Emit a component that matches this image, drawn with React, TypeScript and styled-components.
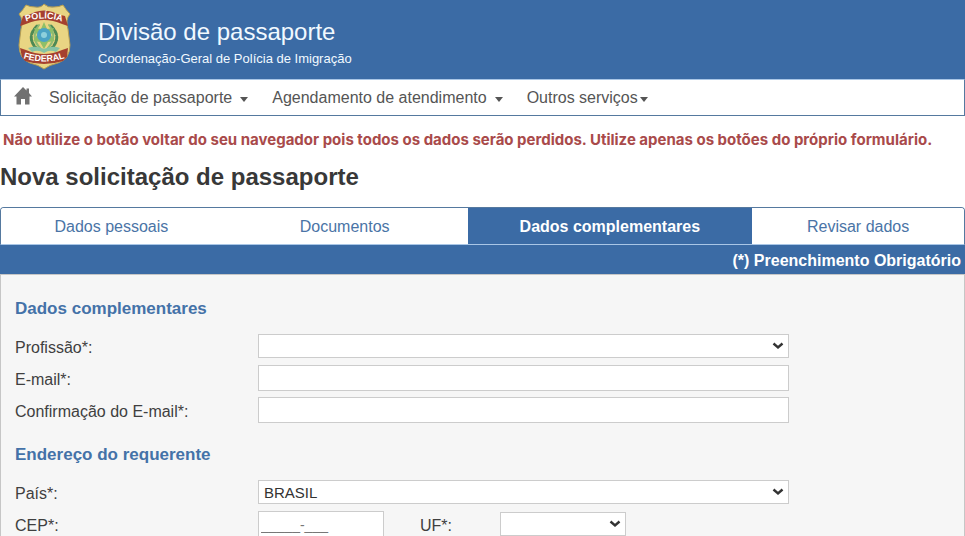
import React, { useState } from "react";
import styled, { createGlobalStyle, css } from "styled-components";

const blue = "#3b6ba5";
const line = "#55799f";

const GlobalStyle = createGlobalStyle`
  *, *::before, *::after { box-sizing: border-box; }
  body {
    margin: 0;
    background: #fff;
    color: #3f3f3f;
    font-family: "Liberation Sans", Arial, Helvetica, sans-serif;
    font-size: 16px;
    line-height: 20px;
  }
`;

const Page = styled.div`
  display: flex;
  flex-direction: column;
  height: 100vh;
  overflow: hidden;
`;

const Header = styled.header`
  display: flex;
  flex: none;
  align-items: flex-start;
  gap: 27px;
  padding: 3px 18px 9px;
  background: ${blue};
  color: #f1f9ff;
`;

const Crest = styled.svg`
  flex: none;
  width: 53px;
  height: 67px;
`;

const Brand = styled.div`
  padding-top: 15px;
`;

const BrandTitle = styled.p`
  margin: 0;
  font-size: 24px;
  line-height: 28px;
`;

const BrandSubtitle = styled.p`
  margin: 0;
  padding-top: 3px;
  font-size: 13px;
  line-height: 20px;
`;

const Nav = styled.nav`
  display: flex;
  flex: none;
  align-items: center;
  gap: 24px;
  height: 37px;
  padding: 0 13px;
  border: 1px solid ${line};
  border-top-color: #a9c6e6;
`;

const HomeLink = styled.a`
  display: flex;
  margin: 0 -7px 4px 0;
  color: #717171;
`;

const MenuButton = styled.button<{ $tight?: boolean }>`
  display: flex;
  align-items: center;
  gap: ${(p) => (p.$tight ? 2 : 8)}px;
  padding: 0;
  border: 0;
  background: none;
  color: #555;
  font: inherit;
  cursor: pointer;

  &::after {
    content: "";
    margin-top: 3px;
    border: 4px solid transparent;
    border-top: 5px solid #555;
    border-bottom: 0;
  }
`;

const Warning = styled.p`
  margin: 14px 3px 0;
  color: #a94a4a;
  font-family: Inter, "Liberation Sans", sans-serif;
  font-size: 15px;
  font-weight: 700;
`;

const PageTitle = styled.h1`
  margin: 13px 0 16px;
  color: #383838;
  font-size: 24px;
  font-weight: bold;
  line-height: 28px;
`;

const Tabs = styled.div`
  display: grid;
  grid-template-columns: 221fr 246fr 285fr 212fr;
  flex: none;
  height: 38px;
  border: 1px solid ${line};
  border-bottom-color: #a9c6e6;
  border-radius: 4px 4px 0 0;
  overflow: hidden;
`;

const Tab = styled.button`
  padding: 2px 0 0;
  border: 0;
  background: #fff;
  color: #4a74a6;
  font: inherit;
  cursor: pointer;

  &[aria-selected="true"] {
    background: ${blue};
    color: #fff;
    font-weight: bold;
  }
`;

const RequiredNote = styled.p`
  margin: 0;
  padding: 6px 4px 3px;
  background: ${blue};
  color: #fff;
  font-weight: bold;
  text-align: right;
`;

const Form = styled.form`
  flex: 1 0 auto;
  padding: 24px 14px 0;
  border: 1px solid #c6c6c6;
  border-bottom: 0;
  background: #f6f6f6;
`;

const Group = styled.fieldset`
  display: flex;
  flex-direction: column;
  gap: 6px;
  margin: 0 0 22px;
  padding: 0;
  border: 0;
`;

const GroupTitle = styled.legend`
  margin-bottom: 14px;
  padding: 0;
  color: #4472a8;
  font-size: 17px;
  font-weight: bold;
`;

const Row = styled.div`
  display: grid;
  grid-template-columns: 243px 126px 36px 80px 126px 1fr;
  align-items: center;
  min-height: 26px;
`;

const Label = styled.label<{ $inner?: boolean }>`
  padding-top: 4px;
  ${(p) => p.$inner && css`grid-column: 4;`}
`;

const field = css<{ $short?: boolean }>`
  width: 100%;
  border: 1px solid #ccc;
  border-radius: 0;
  background-color: #fff;
  color: #333;
  font-family: inherit;
  font-size: 15px;
  ${(p) => !p.$short && css`grid-column: 2 / 7; max-width: 531px;`}
`;

const TextInput = styled.input`
  ${field}
  height: 26px;
  padding: 0 3px;
`;

const MaskedInput = styled(TextInput)`
  padding: 2px 2px 0;
  color: #777;
  font-size: 14px;
`;

const arrow = encodeURIComponent(
  '<svg xmlns="http://www.w3.org/2000/svg" width="12" height="8" viewBox="0 0 12 8"><path d="M1.5 1.5 6 5.5l4.5-4" fill="none" stroke="#333" stroke-width="2.4"/></svg>'
);

const Select = styled.select`
  ${field}
  height: 24px;
  padding: 0 24px 0 5px;
  appearance: none;
  background-image: url("data:image/svg+xml,${arrow}");
  background-position: right 4px center;
  background-repeat: no-repeat;
`;

function PoliceCrest() {
  return (
    <Crest viewBox="0 0 53 67" role="img" aria-label="Polícia Federal">
      <path d="M26 1 Q30 5 36 4 Q41 4 45 2 Q48 7 52 11 Q47 17 50 26 L52 42 Q52 56 40 60 Q31 62 26 66 Q21 62 12 60 Q1 56 1 42 L3 26 Q6 17 1 11 Q5 7 8 2 Q12 4 17 4 Q23 5 26 1Z" fill="#e9d583" stroke="#b59d52" strokeWidth="1" />
      <g stroke="#4d8a55" strokeWidth="3" fill="none" strokeLinecap="round" strokeDasharray="4 2">
        <path d="M19 23 Q8 34 18 45" />
        <path d="M33 23 Q44 34 34 45" />
      </g>
      <g stroke="#8dbb72" strokeWidth="2" fill="none" strokeLinecap="round">
        <path d="M21 22 Q12 34 22 45" />
        <path d="M31 22 Q40 34 30 45" />
      </g>
      <path d="M26 19 L29 26 L36 25 L33 32 L37 38 L30 39 L26 46 L22 39 L15 38 L19 32 L16 25 L23 26Z" fill="#8fbf68" />
      <circle cx="26" cy="32" r="7" fill="#4ba3c4" />
      <circle cx="26" cy="32" r="3" fill="#8ed0dc" />
      <path d="M10 45 Q18 42 26 46 Q34 42 42 45 L38 49 Q32 46 26 50 Q20 46 14 49Z" fill="#86c3a4" />
      <path d="M2 23 L5 13 Q14 11 17 9 Q26 6 35 9 Q38 11 47 13 L50 23 L44 21 Q26 13 8 21Z" fill="#a5402f" />
      <path d="M2 45 L8 47 Q26 55 44 47 L50 45 L49 54 L45 58 Q26 64 7 58 L4 54Z" fill="#a5402f" />
      <path id="crest-top" d="M4 20 Q26 11 48 20" fill="none" />
      <path id="crest-bottom" d="M2 54 Q26 63 50 54" fill="none" />
      <g fill="#fff" fontSize="9" fontWeight="bold" textAnchor="middle">
        <text><textPath href="#crest-top" startOffset="50%">POLÍCIA</textPath></text>
        <text><textPath href="#crest-bottom" startOffset="50%">FEDERAL</textPath></text>
      </g>
    </Crest>
  );
}

function HomeIcon() {
  return (
    <svg width="18" height="18" viewBox="0 0 18 18" fill="currentColor" aria-hidden="true">
      <path d="M9 0 L12.500 3.500 V1.500 H15 V6 L18 9.500 H15.500 V17.500 H11 V12 H7 V17.500 H2.500 V9.500 H0Z" />
    </svg>
  );
}

const tabs = ["Dados pessoais", "Documentos", "Dados complementares", "Revisar dados"];

export default function App() {
  const [active, setActive] = useState(2);
  const [cep, setCep] = useState("_____-___");
  return (
    <Page>
      <GlobalStyle />
      <Header>
        <PoliceCrest />
        <Brand>
          <BrandTitle>Divisão de passaporte</BrandTitle>
          <BrandSubtitle>Coordenação-Geral de Polícia de Imigração</BrandSubtitle>
        </Brand>
      </Header>
      <Nav aria-label="Principal">
        <HomeLink href="#" aria-label="Início"><HomeIcon /></HomeLink>
        <MenuButton type="button">Solicitação de passaporte</MenuButton>
        <MenuButton type="button">Agendamento de atendimento</MenuButton>
        <MenuButton type="button" $tight>Outros serviços</MenuButton>
      </Nav>
      <Warning role="alert">
        Não utilize o botão voltar do seu navegador pois todos os dados serão perdidos. Utilize apenas os botões do próprio formulário.
      </Warning>
      <PageTitle>Nova solicitação de passaporte</PageTitle>
      <Tabs role="tablist">
        {tabs.map((name, i) => (
          <Tab key={name} type="button" role="tab" aria-selected={i === active} onClick={() => setActive(i)}>
            {name}
          </Tab>
        ))}
      </Tabs>
      <RequiredNote>(*) Preenchimento Obrigatório</RequiredNote>
      <Form>
        <Group>
          <GroupTitle>Dados complementares</GroupTitle>
          <Row>
            <Label htmlFor="profissao">Profissão*:</Label>
            <Select id="profissao"><option></option></Select>
          </Row>
          <Row>
            <Label htmlFor="email">E-mail*:</Label>
            <TextInput id="email" type="email" />
          </Row>
          <Row>
            <Label htmlFor="email2">Confirmação do E-mail*:</Label>
            <TextInput id="email2" type="email" />
          </Row>
        </Group>
        <Group>
          <GroupTitle>Endereço do requerente</GroupTitle>
          <Row>
            <Label htmlFor="pais">País*:</Label>
            <Select id="pais"><option>BRASIL</option></Select>
          </Row>
          <Row>
            <Label htmlFor="cep">CEP*:</Label>
            <MaskedInput id="cep" $short value={cep} onChange={(e) => setCep(e.target.value)} />
            <Label htmlFor="uf" $inner>UF*:</Label>
            <Select id="uf" $short><option></option></Select>
          </Row>
        </Group>
      </Form>
    </Page>
  );
}
